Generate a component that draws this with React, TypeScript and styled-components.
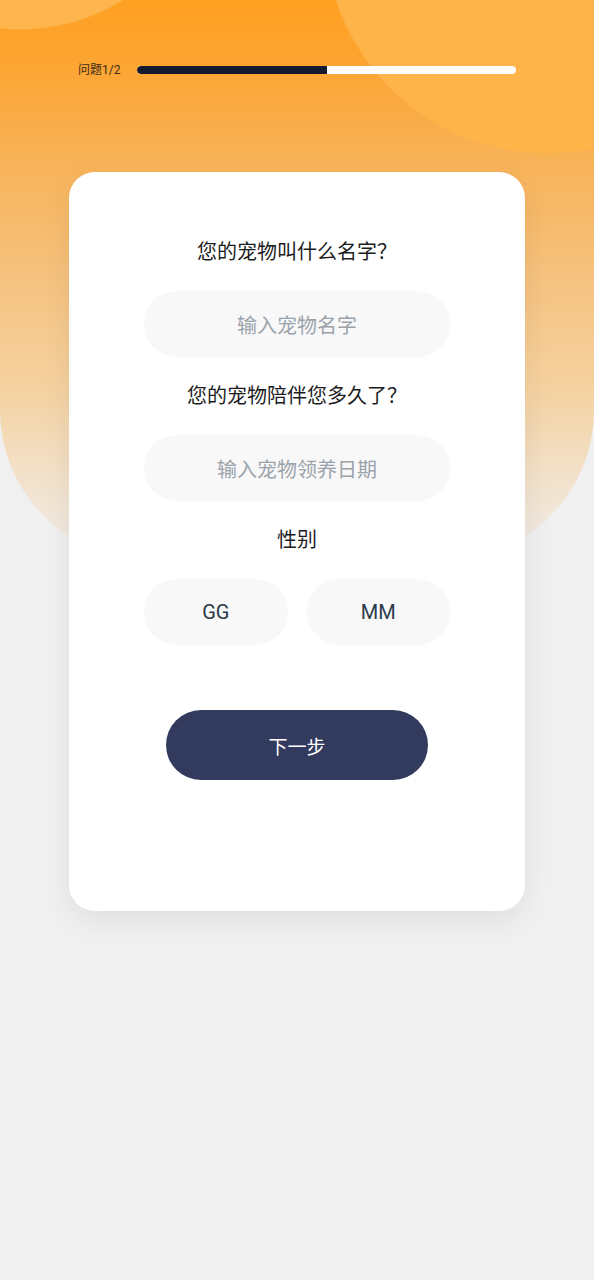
import React from "react";
import styled, { createGlobalStyle } from "styled-components";

const GlobalStyle = createGlobalStyle`
  html, body {
    margin: 0;
    padding: 0;
    background: #f0f0f0;
  }
  body {
    font-family: Roboto, "Noto Sans CJK SC", "Noto Sans", sans-serif;
  }
  * { box-sizing: border-box; }
`;

const Page = styled.div`
  width: 594px;
  min-height: 1280px;
  background: #f0f0f0;
  overflow: hidden;
`;

const Hero = styled.div`
  height: 560px;
  border-radius: 0 0 150px 150px;
  padding-top: 62px;
  background:
    radial-gradient(circle 224px at 548px -70px, #ffb44a 99.4%, rgba(255, 180, 74, 0) 100%),
    radial-gradient(circle 197px at 20px -167px, #ffb54d 99.3%, rgba(255, 181, 77, 0) 100%),
    linear-gradient(
      180deg,
      #ffa021 0%,
      #fca533 12%,
      #f8b256 28%,
      #f6c17c 48%,
      #f5d2a2 70%,
      #f2e2cc 86%,
      #f0edea 100%
    );
`;

const ProgressRow = styled.div`
  display: flex;
  align-items: center;
  gap: 17px;
  padding: 0 78px;
  height: 16px;
`;

const ProgressLabel = styled.span`
  font-size: 12px;
  line-height: 16px;
  color: #3a2a18;
  white-space: nowrap;
`;

const Track = styled.div`
  flex: 1;
  height: 8px;
  border-radius: 4px;
  background: #ffffff;
  overflow: hidden;
  display: flex;
`;

const Fill = styled.div<{ $pct: number }>`
  width: ${(p) => p.$pct}%;
  height: 100%;
  background: #151a2e;
  border-radius: 4px 0 0 4px;
`;

const Card = styled.div`
  margin: 94px 69px 0;
  background: #ffffff;
  border-radius: 26px;
  box-shadow: 0 10px 30px rgba(0, 0, 0, 0.07);
  padding: 67px 75px 131px;
  display: flex;
  flex-direction: column;
  align-items: center;
  gap: 26px;
`;

const Question = styled.div`
  font-size: 20px;
  line-height: 26px;
  color: #1c1c1e;
  text-align: center;
`;

const Field = styled.div`
  width: 306px;
  height: 66px;
  border-radius: 33px;
  background: #f8f8f9;
  display: flex;
  align-items: center;
  justify-content: center;
  font-size: 20px;
  color: #9ba3aa;
`;

const ChoiceRow = styled.div`
  width: 306px;
  display: flex;
  gap: 19px;
`;

const Choice = styled.div`
  flex: 1;
  height: 66px;
  border-radius: 33px;
  background: #f8f8f9;
  display: flex;
  align-items: center;
  justify-content: center;
  font-size: 20px;
  color: #2b3a48;
`;

const NextButton = styled.div`
  margin-top: 39px;
  width: 262px;
  height: 70px;
  border-radius: 35px;
  background: #323a5e;
  color: #ffffff;
  font-size: 19px;
  display: flex;
  align-items: center;
  justify-content: center;
`;

export default function App() {
  const current = 1;
  const total = 2;
  return (
    <Page>
      <GlobalStyle />
      <Hero>
        <ProgressRow>
          <ProgressLabel>问题{current}/{total}</ProgressLabel>
          <Track>
            <Fill $pct={(current / total) * 100} />
          </Track>
        </ProgressRow>
        <Card>
          <Question>您的宠物叫什么名字？</Question>
          <Field>输入宠物名字</Field>
          <Question>您的宠物陪伴您多久了？</Question>
          <Field>输入宠物领养日期</Field>
          <Question>性别</Question>
          <ChoiceRow>
            <Choice>GG</Choice>
            <Choice>MM</Choice>
          </ChoiceRow>
          <NextButton>下一步</NextButton>
        </Card>
      </Hero>
    </Page>
  );
}
